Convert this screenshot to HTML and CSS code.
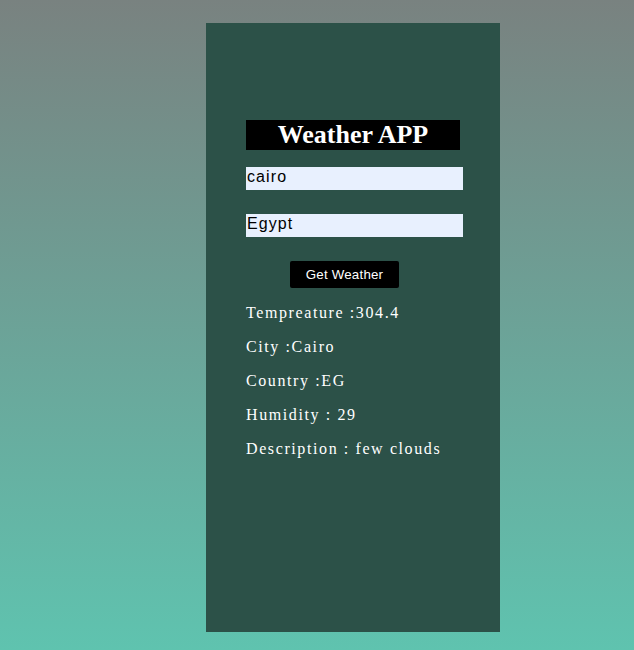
FILE: index.html
```html
<!DOCTYPE html>
<html>
<head>
<meta charset="utf-8">
<link rel="stylesheet" href="styles.css">
</head>
<body>
<div class="card">
  <h1 class="title">Weather APP</h1>
  <input class="field" type="text" value="cairo">
  <input class="field" type="text" value="Egypt">
  <button class="btn">Get Weather</button>
  <div class="info">
    <p class="line">Tempreature :304.4</p>
    <p class="line">City :Cairo</p>
    <p class="line">Country :EG</p>
    <p class="line">Humidity : 29</p>
    <p class="line">Description : few clouds</p>
  </div>
</div>
</body>
</html>
```
FILE: styles.css
```css
html, body { margin: 0; padding: 0; }
body {
  width: 634px;
  height: 650px;
  background: linear-gradient(to bottom, #798280 0%, #5fc3af 100%);
  font-family: "Liberation Serif", serif;
  overflow: hidden;
}
.card {
  box-sizing: border-box;
  width: 294px;
  height: 609px;
  margin: 23px 0 0 206px;
  background: #2c5148;
  padding: 97px 40px 0 40px;
  display: flex;
  flex-direction: column;
  align-items: flex-start;
}
.title {
  margin: 0;
  width: 214px;
  height: 30px;
  background: #000;
  color: #fff;
  font-family: "Liberation Serif", serif;
  font-weight: bold;
  font-size: 26px;
  line-height: 30px;
  text-align: center;
}
.field {
  box-sizing: border-box;
  width: 217px;
  height: 23px;
  margin: 17px 0 0 0;
  padding: 0 1px 3px 1px;
  border: none;
  outline: none;
  background: #e8f0fe;
  color: #000;
  font-family: "Liberation Sans", sans-serif;
  font-size: 16px;
  letter-spacing: 1.1px;
}
.field + .field { margin-top: 24px; }
.btn {
  margin: 24px 0 0 44px;
  width: 109px;
  height: 27px;
  background: #000;
  color: #fff;
  border: none;
  border-radius: 2px;
  font-family: "Liberation Sans", sans-serif;
  font-weight: normal;
  font-size: 13.33px;
  letter-spacing: 0.2px;
  padding: 0;
}
.info { margin-top: 8px; }
.line {
  margin: 0;
  color: #fff;
  font-size: 16px;
  line-height: 34px;
  letter-spacing: 1.6px;
}
```
